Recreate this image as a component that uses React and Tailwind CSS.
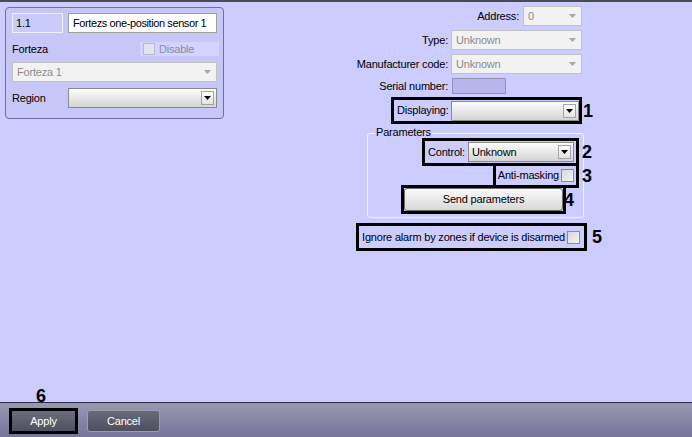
import React from 'react';

const Arrow = ({ color }) => (
  <svg width="7" height="4" viewBox="0 0 7 4">
    <path d="M0 0H7L3.5 4Z" fill={color} />
  </svg>
);

const DisabledCombo = ({ value, className }) => (
  <div className={`flex h-[20px] items-center justify-between border border-[#c2c2c2] bg-[#f2f2f2] pl-[4px] pr-[5px] text-[#8c8c8c] ${className}`}>
    <span>{value}</span>
    <Arrow color="#a8a8a8" />
  </div>
);

const Combo = ({ value, className }) => (
  <div className={`flex h-[20px] items-center justify-between border border-[#8a8a8a] bg-linear-to-b from-[#fdfdfd] to-[#d4d4d4] pl-[3px] pr-[2px] ${className}`}>
    <span>{value}</span>
    <div className="flex h-[14px] w-[13px] items-center justify-center border border-[#a4a4a4] bg-linear-to-b from-white to-[#e2e2e2]">
      <Arrow color="#000" />
    </div>
  </div>
);

const Check = ({ disabled }) => (
  <div
    className={
      disabled
        ? 'h-[12px] w-[12px] border border-[#b8b8c8] bg-[#e2e2f2]'
        : 'h-[13px] w-[13px] border border-[#8c8c8c] bg-linear-to-br from-[#d8d8d8] to-[#f4f4f4]'
    }
  />
);

const Num = ({ n, className }) => (
  <span className={`absolute left-full top-1/2 -translate-y-1/2 text-[18px] font-bold leading-none tracking-normal ${className}`}>
    {n}
  </span>
);

export default function App() {
  return (
    <div className="flex h-[437px] w-[692px] flex-col overflow-hidden bg-[#ccccff] font-['Liberation_Sans',Arial,sans-serif] text-[11px] tracking-[-0.2px] text-black">
      <div className="h-[2px] bg-[#4a4a58]" />

      <div className="flex flex-1">
        {/* left panel */}
        <div className="ml-[5px] mt-[5px] flex h-[112px] w-[219px] flex-col rounded-[4px] border border-[#6e6ea6] bg-[#c7c7f7] px-[6px] pt-[5px]">
          <div className="flex h-[20px] gap-[5px]">
            <div className="flex w-[51px] items-center border border-[#eeeeff] bg-[#cbcbfb] pl-[3px]">1.1</div>
            <div className="flex flex-1 items-center overflow-hidden whitespace-nowrap border border-[#a0a0a0] bg-white pl-[4px] tracking-[-0.4px]">
              Fortezs one-position sensor 1
            </div>
          </div>
          <div className="mt-[9px] flex h-[14px] items-center justify-between">
            <span>Forteza</span>
            <div className="-mr-[2px] flex h-full w-[79px] items-center bg-[#d3d3ff] pl-[3px]">
              <Check disabled />
              <span className="ml-[4px] text-[#8c8c9c]">Disable</span>
            </div>
          </div>
          <DisabledCombo value="Forteza 1" className="mt-[6px]" />
          <div className="mt-[6px] flex h-[20px] items-center justify-between">
            <span>Region</span>
            <Combo value="" className="w-[149px]" />
          </div>
        </div>

        {/* right column */}
        <div className="flex flex-1 flex-col items-end pt-[4px]">
          <div className="mr-[110px] flex h-[20px] items-center gap-[4px]">
            <span>Address:</span>
            <DisabledCombo value="0" className="w-[59px]" />
          </div>
          <div className="mr-[110px] mt-[4px] flex h-[20px] items-center gap-[3px]">
            <span>Type:</span>
            <DisabledCombo value="Unknown" className="w-[131px]" />
          </div>
          <div className="mr-[110px] mt-[4px] flex h-[20px] items-center gap-[3px]">
            <span>Manufacturer code:</span>
            <DisabledCombo value="Unknown" className="w-[131px]" />
          </div>
          <div className="mr-[110px] mt-[4px] flex h-[16px] items-center gap-[4px]">
            <span>Serial number:</span>
            <div className="h-[16px] w-[54px] border border-[#9494b0] bg-[#b6b6ee]" />
            <div className="w-[72px]" />
          </div>

          <div className="relative mr-[110px] mt-[3px] flex h-[27px] w-[191px] items-center justify-between border-[3px] border-black pl-[3px]">
            <span>Displaying:</span>
            <Combo value="" className="w-[128px]" />
            <Num n="1" className="ml-[4px]" />
          </div>

          <div className="relative mr-[108px] mt-[9px] flex h-[85px] w-[217px] flex-col items-end rounded-[3px] border border-[#f2f2ff] pr-[4px] pt-[4px]">
            <span className="absolute -top-[7px] left-[7px] bg-[#ccccff] px-[1px] leading-none">Parameters</span>
            <div className="relative flex h-[28px] w-[157px] items-center gap-[3px] border-[3px] border-black pl-[3px] pr-[2px]">
              <span>Control:</span>
              <Combo value="Unknown" className="flex-1" />
              <Num n="2" className="ml-[6px]" />
            </div>
            <div className="relative -mt-[3px] flex h-[25px] w-[86px] items-center justify-end gap-[2px] border-[3px] border-black pr-[2px]">
              <span>Anti-masking</span>
              <Check />
              <Num n="3" className="ml-[6px]" />
            </div>
            <div className="relative -mt-[3px] mr-[13px] flex h-[29px] w-[165px] border-[3px] border-black">
              <button className="flex-1 rounded-[3px] border border-[#6e6e6e] bg-linear-to-b from-[#fbfbfb] to-[#d8d8d8] text-center">
                Send parameters
              </button>
              <Num n="4" className="ml-[1px]" />
            </div>
          </div>

          <div className="relative mr-[105px] mt-[5px] flex h-[28px] w-[231px] items-center justify-end gap-[2px] border-[3px] border-black pr-[4px]">
            <span>Ignore alarm by zones if device is disarmed</span>
            <Check />
            <Num n="5" className="ml-[8px]" />
          </div>
        </div>
      </div>

      {/* bottom bar */}
      <div className="flex h-[35px] items-start border-t border-[#2a2a40] bg-linear-to-b from-[#9a98b0] to-[#76749a] pl-[9px] pt-[5px]">
        <div className="relative flex h-[26px] w-[69px] border-[3px] border-black">
          <span className="absolute -top-[24px] left-[24px] text-[18px] font-bold leading-none tracking-normal">6</span>
          <button className="flex-1 bg-linear-to-b from-[#6c6c7c] to-[#50505e] text-white">Apply</button>
        </div>
        <button className="ml-[9px] mt-[2px] h-[22px] w-[73px] rounded-[3px] border border-[#9c9cb0] bg-linear-to-b from-[#6a6a7a] to-[#4e4e5e] text-white">
          Cancel
        </button>
      </div>
    </div>
  );
}
